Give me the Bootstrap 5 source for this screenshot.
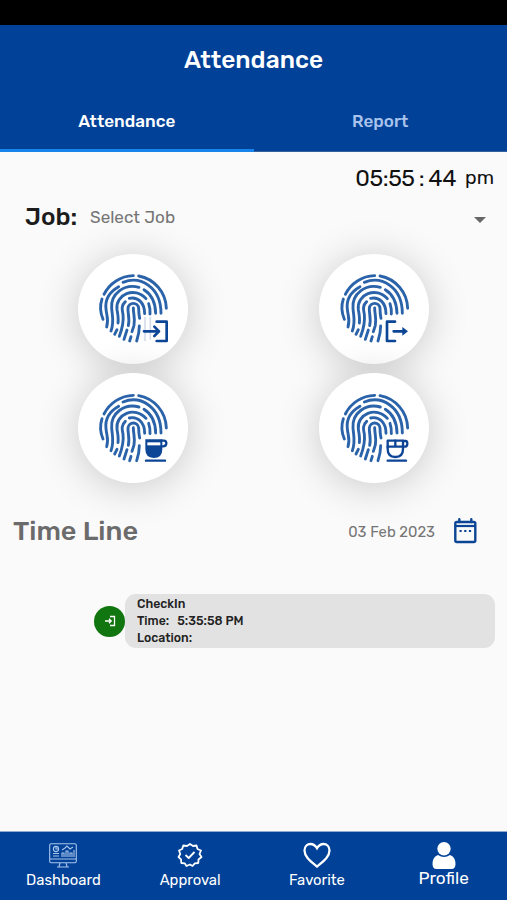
<!DOCTYPE html>
<html lang="en">
<head>
<meta charset="utf-8">
<meta name="viewport" content="width=device-width, initial-scale=1">
<title>Attendance</title>
<link href="https://cdn.jsdelivr.net/npm/bootstrap@5.3.0/dist/css/bootstrap.min.css" rel="stylesheet">
<style>
:root{--brand:#014197}
body{font-family:Rubik,Roboto,"Liberation Sans",sans-serif;background:#fafafa;color:#1c1c1c;height:900px;overflow:hidden}
svg{display:block;flex:none}
.status-strip{height:25px;background:#000}
.app-head{height:127px;background:var(--brand);color:#fff}
.app-title{height:70px;font-size:24.5px;font-weight:500;line-height:70px}
.tab-item{height:57px;line-height:53px;font-size:17.1px;font-weight:500;color:#a9c3ec;border-bottom:1px solid #35629f}
.tab-item.current{color:#fff;border-bottom:3px solid #1784ec}
.clock{height:52px;line-height:52px;color:#111;padding-right:13px}
.clock .digits{font-size:23px;word-spacing:-1px;letter-spacing:-.45px}
.clock .half{font-size:19.5px;margin-left:9px}
.job-row{height:26px;padding:0 21px 0 25px}
.job-label{font-size:24.5px;font-weight:500;width:65px;white-space:nowrap;padding-top:1px}
.job-value{font-size:17.1px;color:#757575;padding-top:1px}
.caret{border:6px solid transparent;border-top:6px solid #666;border-bottom:0;margin-top:5px}
.punch-grid{padding:23.7px 12.5px 0 13px;row-gap:9.8px}
.punch{width:110px;height:110px;background:#fff;box-shadow:0 4px 42px rgba(0,0,0,.2)}
.timeline-head{height:40px;margin-top:27.7px;padding:0 29px 0 13px;color:#6b6b6b}
.timeline-title{font-size:27.1px;font-weight:500;padding-top:1px}
.date{font-size:14.8px;color:#757575;margin-right:18px;padding-top:1px}
.entry{margin-top:43px;padding:0 12px 0 94px}
.dot{width:31px;height:31px;background:#117510}
.entry-box{height:54px;background:#e2e2e2;border-radius:11px;padding:1px 12px;font-size:12.3px;line-height:17px;font-weight:500;color:#222}
.bottom-bar{height:69px;background:var(--brand);border-top:1px solid #8fa9cf;color:#fff;font-size:14.8px}
.bottom-bar a{width:126.9px;padding-top:9px;color:#fff;text-decoration:none}
.bottom-bar svg{height:29px}
.bottom-bar .big{font-size:17.2px;margin-top:-2px}
.nav-text{line-height:21px;height:20px}
</style>
</head>
<body class="d-flex flex-column">
<svg class="position-absolute" width="0" height="0" aria-hidden="true">
<defs>
<g id="finger" fill="none" stroke="#2a63a9" stroke-width="8.6" stroke-linecap="round">
<path d="M103 147A101 101 0 0 1 191 91M207 92A101 101 0 0 1 290 189M97 161Q87 190 100 222"/>
<path d="M160 111C212 90 274 125 274 204M147 124C117 141 106 166 109 191C111 214 118 222 111 245"/>
<path d="M208 126C164 114 122 145 126 189C128 214 134 230 124 257M223 133Q257 154 258 204"/>
<path d="M229 160C196 122 136 147 142 193C145 209 147 219 145 233M237 175Q242 190 241 206M142 253L135 267"/>
<path d="M179 159C204 153 225 172 225 205M167 169C154 181 157 193 160 207C163 232 158 249 149 273"/>
<path d="M176 241C181 220 174 204 175 189C177 169 205 169 207 189Q207 205 210 219M172 254L163 282"/>
<path d="M191 188C191 207 197 219 193 240L187 259M184 274L180 287M209 242Q209 262 201 287"/>
</g>
</defs>
</svg>

<div class="status-strip"></div>
<header class="app-head text-center">
  <div class="app-title">Attendance</div>
  <div class="row g-0">
    <div class="col-6 tab-item current">Attendance</div>
    <div class="col-6 tab-item">Report</div>
  </div>
</header>

<main class="flex-grow-1">
  <div class="clock d-flex justify-content-end"><span class="digits">05:55 : 44</span><span class="half">pm</span></div>
  <div class="job-row d-flex align-items-center">
    <span class="job-label">Job:</span><span class="job-value">Select Job</span><span class="caret ms-auto"></span>
  </div>

  <div class="punch-grid row g-0">
    <div class="col-6 d-flex justify-content-center"><div class="punch rounded-circle"><svg width="110" height="110" viewBox="25 26 330 330"><use href="#finger"/>
      <g stroke="#d5dceb" stroke-width="5"><path d="M226 215V287M242 215V283"/></g>
      <g fill="none" stroke="#0d4596" stroke-width="8" stroke-linecap="round" stroke-linejoin="round"><path d="M261 229H291V287H261M223 258H266"/><path d="M254 244L268 258L254 272"/></g></svg></div></div>
    <div class="col-6 d-flex justify-content-center"><div class="punch rounded-circle"><svg width="110" height="110" viewBox="27 26 330 330"><use href="#finger" x="3"/>
      <g fill="none" stroke="#0d4596" stroke-width="8" stroke-linecap="round" stroke-linejoin="round"><path d="M255 229H231V287H255M251 258H281"/></g><path d="M277 245L294 258L277 271Z" fill="#0d4596"/></svg></div></div>
    <div class="col-6 d-flex justify-content-center"><div class="punch rounded-circle"><svg width="110" height="110" viewBox="25 24 330 330"><use href="#finger"/>
      <path d="M222 217H280V255Q280 282 251 282Q222 278 222 254Z" fill="#fff"/>
      <path d="M227 223H278V252Q278 279 252 279Q227 278 227 252Z" fill="#0d4596"/><path d="M233 232H272V241H233Z" fill="#fff"/>
      <path d="M276 227H283Q290 227 290 235Q290 244 280 244H276M229 287H286" fill="none" stroke="#0d4596" stroke-width="7" stroke-linecap="round"/></svg></div></div>
    <div class="col-6 d-flex justify-content-center"><div class="punch rounded-circle"><svg width="110" height="110" viewBox="27 24 330 330"><use href="#finger" x="3"/>
      <g fill="#fff" stroke="#0d4596" stroke-width="7" stroke-linecap="round" stroke-linejoin="round"><path d="M233 227H279V252Q279 276 256 276Q233 276 233 252Z"/><path d="M279 228H287Q292 228 292 236Q292 245 283 245H233M256 227V244M233 287H288" fill="none"/></g></svg></div></div>
  </div>

  <div class="timeline-head d-flex align-items-center">
    <span class="timeline-title me-auto">Time Line</span>
    <span class="date">03 Feb 2023</span>
    <svg width="25" height="26" viewBox="0 0 25 26" fill="none" stroke="#0d4596" stroke-width="2.4"><rect x="2.3" y="4" width="20" height="20" rx="1.5"/><path d="M2 8H23" stroke-width="2.2"/><path d="M6.3 1.3V4M18.3 1.3V4" stroke-linecap="round"/><path d="M6.5 13H8.7M11.2 13H13.4M15.9 13H18.1" stroke-width="2.2"/></svg>
  </div>

  <div class="entry d-flex align-items-center">
    <div class="dot rounded-circle d-flex align-items-center justify-content-center"><svg width="12" height="12" viewBox="0 0 12 12" fill="none" stroke="#fff" stroke-width="1.3"><path d="M6 1.5H10.5V10.5H6M1 6H7M5 3.8L7.2 6L5 8.2"/></svg></div>
    <div class="entry-box flex-grow-1">
      <div>CheckIn</div>
      <div>Time:<span class="ms-2">5:35:58 PM</span></div>
      <div>Location:</div>
    </div>
  </div>
</main>

<nav class="bottom-bar d-flex">
  <a href="#" class="d-flex flex-column align-items-center">
    <svg width="28" height="29" viewBox="0 0 28 29" fill="none" stroke="#a9c6ee" stroke-width="1.1"><rect x=".7" y="2.7" width="26.6" height="19" rx="1.5"/><path d="M1 18H27M11 22L10 25.5M17 22L18 25.5M8 26H20" /><circle cx="7" cy="8" r="2.6"/><path d="M7 5V8H10M4 12.5H10M4 15H10M13 16V12H15V16M17 16V10H19V16M21 16V12H23V16M25 16V9M13 9L16 7L18 5L21 8L24 6"/></svg>
    <span class="nav-text">Dashboard</span></a>
  <a href="#" class="d-flex flex-column align-items-center">
    <svg width="26" height="29" viewBox="0 0 26 29" fill="none" stroke="#fff" stroke-width="1.8" stroke-linejoin="round"><path d="M13 3L16 5L19.5 4.5L20.5 8L24 9.5L22.5 13L24.5 16L21.5 18.5L21.3 22L17.8 22.3L15.5 25L13 23.5L9.5 25L7.7 22.3L4.3 22L4 18.3L1.5 16L3.3 13L2 9.5L5.2 8L6.3 4.5L10 5Z"/><path d="M8.5 14L11.7 17L17.5 11"/></svg>
    <span class="nav-text">Approval</span></a>
  <a href="#" class="d-flex flex-column align-items-center">
    <svg width="28" height="29" viewBox="0 0 28 29" fill="none" stroke="#fff" stroke-width="2.3"><path d="M14 25.5C8 20.5 1.5 16 1.5 9.5C1.5 5.5 4.3 3 7.5 3C10.5 3 12.5 4.7 14 7.2C15.5 4.7 17.5 3 20.5 3C23.7 3 26.5 5.5 26.5 9.5C26.5 16 20 20.5 14 25.5Z"/></svg>
    <span class="nav-text">Favorite</span></a>
  <a href="#" class="d-flex flex-column align-items-center">
    <svg width="24" height="29" viewBox="0 0 24 29" fill="#fff"><circle cx="12" cy="7.7" r="6.7"/><path d="M6 14Q12 18 18 14Q23.5 16 23.5 23Q23.5 28 19.5 28H4.5Q.5 28 .5 23Q.5 16 6 14Z"/></svg>
    <span class="nav-text big">Profile</span></a>
</nav>
<script src="https://cdn.jsdelivr.net/npm/bootstrap@5.3.0/dist/js/bootstrap.bundle.min.js"></script>
</body>
</html>
